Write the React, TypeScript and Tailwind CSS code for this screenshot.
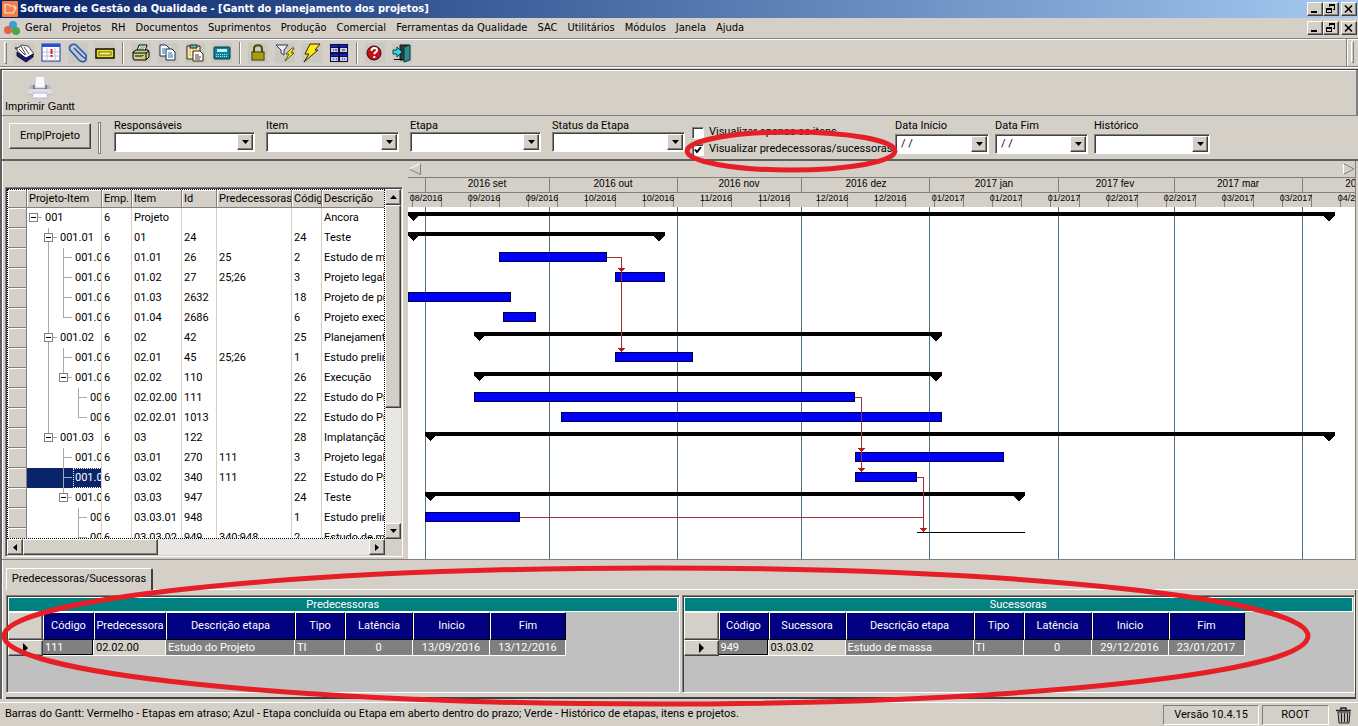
import { ReactNode } from 'react';

interface TreeRow {
  level: number;
  code: string;
  open?: boolean;
  full?: number[];
  top?: number[];
  item: string;
  id: string;
  pred?: string;
  cod?: string;
  desc: string;
  selected?: boolean;
}

const MENUS = ['Geral', 'Projetos', 'RH', 'Documentos', 'Suprimentos', 'Produção', 'Comercial', 'Ferramentas da Qualidade', 'SAC', 'Utilitários', 'Módulos', 'Janela', 'Ajuda'];

const ROWS: TreeRow[] = [
  { level: 0, code: '001', open: true, item: 'Projeto', id: '', desc: 'Ancora' },
  { level: 1, code: '001.01', open: true, full: [1], item: '01', id: '24', cod: '24', desc: 'Teste' },
  { level: 2, code: '001.0', full: [1, 2], item: '01.01', id: '26', pred: '25', cod: '2', desc: 'Estudo de m' },
  { level: 2, code: '001.0', full: [1, 2], item: '01.02', id: '27', pred: '25;26', cod: '3', desc: 'Projeto legal' },
  { level: 2, code: '001.0', full: [1, 2], item: '01.03', id: '2632', cod: '18', desc: 'Projeto de pr' },
  { level: 2, code: '001.0', full: [1], top: [2], item: '01.04', id: '2686', cod: '6', desc: 'Projeto exec' },
  { level: 1, code: '001.02', open: true, full: [1], item: '02', id: '42', cod: '25', desc: 'Planejamento' },
  { level: 2, code: '001.0', full: [1, 2], item: '02.01', id: '45', pred: '25;26', cod: '1', desc: 'Estudo prelim' },
  { level: 2, code: '001.0', open: true, full: [1], top: [2], item: '02.02', id: '110', cod: '26', desc: 'Execução' },
  { level: 3, code: '00', full: [1, 3], item: '02.02.00', id: '111', cod: '22', desc: 'Estudo do Pr' },
  { level: 3, code: '00', full: [1], top: [3], item: '02.02.01', id: '1013', cod: '22', desc: 'Estudo do Pr' },
  { level: 1, code: '001.03', open: true, top: [1], item: '03', id: '122', cod: '28', desc: 'Implatanção' },
  { level: 2, code: '001.0', full: [2], item: '03.01', id: '270', pred: '111', cod: '3', desc: 'Projeto legal' },
  { level: 2, code: '001.0', full: [2], item: '03.02', id: '340', pred: '111', cod: '22', desc: 'Estudo do Pr', selected: true },
  { level: 2, code: '001.0', open: true, top: [2], item: '03.03', id: '947', cod: '24', desc: 'Teste' },
  { level: 3, code: '00', full: [3], item: '03.03.01', id: '948', cod: '1', desc: 'Estudo prelim' },
  { level: 3, code: '00', full: [3], item: '03.03.02', id: '949', pred: '340;948', cod: '2', desc: 'Estudo de m' },
];

// chart coordinates, relative to the left edge of the time scale
const MONTH_LINES = [17, 141, 269, 393, 521, 650, 766, 894];
const MONTHS = [
  { x: 79, label: '2016 set' },
  { x: 205, label: '2016 out' },
  { x: 331, label: '2016 nov' },
  { x: 458, label: '2016 dez' },
  { x: 586, label: '2017 jan' },
  { x: 707, label: '2017 fev' },
  { x: 830, label: '2017 mar' },
  { x: 957, label: '2017 abr' },
];
const WEEKS = ['08/2016', '09/2016', '09/2016', '10/2016', '10/2016', '11/2016', '11/2016', '12/2016', '12/2016', '01/2017', '01/2017', '01/2017', '02/2017', '02/2017', '03/2017', '03/2017', '04/2017'];

const SUMMARIES = [
  { row: 0, from: 0, to: 927 },
  { row: 1, from: 0, to: 257 },
  { row: 6, from: 66, to: 534 },
  { row: 8, from: 66, to: 534 },
  { row: 11, from: 17, to: 927 },
  { row: 14, from: 17, to: 617 },
];
const BARS = [
  { row: 2, from: 91, to: 199 },
  { row: 3, from: 207, to: 257 },
  { row: 4, from: 0, to: 103 },
  { row: 5, from: 95, to: 128 },
  { row: 7, from: 207, to: 285 },
  { row: 9, from: 66, to: 447 },
  { row: 10, from: 153, to: 534 },
  { row: 12, from: 447, to: 596 },
  { row: 13, from: 447, to: 509 },
  { row: 15, from: 17, to: 112 },
];

const raised = 'border border-t-white border-l-white border-r-[#404040] border-b-[#404040] bg-[#d4d0c8] shadow-[inset_-1px_-1px_0_#808080]';
const sunken = 'border border-t-[#808080] border-l-[#808080] border-r-white border-b-white shadow-[inset_1px_1px_0_#404040]';

function WindowButtons() {
  return (
    <div className="flex">
      <button aria-label="Minimizar" className={`flex h-[14px] w-4 items-center justify-center ${raised}`}>
        <svg width="10" height="10" shapeRendering="crispEdges"><path d="M1 7h6v2H1z" /></svg>
      </button>
      <button aria-label="Restaurar" className={`flex h-[14px] w-4 items-center justify-center ${raised}`}>
        <svg width="10" height="10" fill="none" stroke="#000" shapeRendering="crispEdges">
          <path d="M3.5 3V.5h5v5H7M3 1.5h6M.5 4.5h5v4h-5zM0 5.5h6" />
        </svg>
      </button>
      <button aria-label="Fechar" className={`ml-[2px] flex h-[14px] w-4 items-center justify-center ${raised}`}>
        <svg width="10" height="10" stroke="#000" strokeWidth="1.6"><path d="M1 1.5l7 7M8 1.5l-7 7" /></svg>
      </button>
    </div>
  );
}

function Tool({ label, children }: { label: string; children: ReactNode }) {
  return (
    <button aria-label={label} title={label} className="h-5 w-5 bg-[#cac8c1]">
      <svg width="20" height="20" viewBox="0 0 20 20">{children}</svg>
    </button>
  );
}

function Separator() {
  return <div className="h-[22px] w-[2px] border-l border-l-[#808080] bg-white" />;
}

function Combo({ id, label, width, value = '', low }: { id: string; label: string; width: string; value?: string; low?: boolean }) {
  return (
    <div className={`flex flex-col ${width}`}>
      <label htmlFor={id} className="h-3 leading-3 whitespace-nowrap">{label}</label>
      <div className={`relative h-5 ${low ? 'mt-[2px]' : ''}`}>
        <select id={id} className={`h-full w-full appearance-none rounded-none bg-white pl-[5px] whitespace-pre ${sunken}`}>
          <option>{value}</option>
        </select>
        <span className={`pointer-events-none absolute top-[2px] right-[2px] flex h-4 w-4 items-center justify-center ${raised}`}>
          <svg width="7" height="4"><path d="M0 0h7L3.5 4z" /></svg>
        </span>
      </div>
    </div>
  );
}

function TreeCell({ row }: { row: TreeRow }) {
  const x = 6 + row.level * 15;
  return (
    <div className={`flex h-5 items-center overflow-hidden ${row.selected ? 'bg-[#0a246a] text-white' : ''}`}>
      <svg width={x + 10} height="20" className="shrink-0" shapeRendering="crispEdges" fill="none" stroke="#a8a8a8">
        {row.full?.map(l => <path key={l} d={`M${l * 15 + 6}.5 0V20`} />)}
        {row.top?.map(l => <path key={l} d={`M${l * 15 + 6}.5 0V10`} />)}
        {!row.open && <path d={`M${x}.5 9.5H${x + 9}`} />}
        {row.open && (
          <>
            <path d={`M${x + 5} 9.5h4`} />
            <rect x={x - 3.5} y="5.5" width="8" height="8" fill="#fff" stroke="#808080" />
            <path d={`M${x - 2} 9.5h5`} stroke="#000" />
          </>
        )}
      </svg>
      <span className={`flex h-full items-center ${row.selected ? 'border border-dotted border-white pl-px' : 'pl-[2px]'}`}>{row.code}</span>
    </div>
  );
}

function ProjectGrid() {
  const head = 'h-[18px] overflow-hidden border-r border-b border-[#808080] bg-[#d4d0c8] p-0 pl-[2px] text-left font-normal whitespace-nowrap shadow-[inset_1px_1px_0_#fff]';
  const cell = 'h-5 overflow-hidden border-r border-[#d4d0c8] p-0 pl-[2px] whitespace-nowrap';
  return (
    <div className={`mt-[26px] mb-[2px] ml-[2px] flex w-[398px] shrink-0 flex-col p-px ${sunken}`}>
      <div className="flex min-h-0 flex-1">
        <div className="min-w-0 flex-1 overflow-hidden border border-dotted border-black bg-white">
          <table className="w-[378px] table-fixed border-separate border-spacing-0 leading-4">
            <colgroup>
              <col className="w-[19px]" />
              <col className="w-[75px]" />
              <col className="w-[30px]" />
              <col className="w-[50px]" />
              <col className="w-[35px]" />
              <col className="w-[75px]" />
              <col className="w-[30px]" />
              <col className="w-[64px]" />
            </colgroup>
            <thead>
              <tr>
                <th className={head} aria-label="Seleção" />
                {['Projeto-Item', 'Emp.', 'Item', 'Id', 'Predecessoras', 'Código', 'Descrição'].map(h => (
                  <th key={h} className={head}>{h}</th>
                ))}
              </tr>
            </thead>
            <tbody>
              {ROWS.map(row => (
                <tr key={row.item}>
                  <td className="h-5 border-r border-b border-[#808080] bg-[#d4d0c8] p-0 shadow-[inset_1px_1px_0_#fff]" />
                  <td className="h-5 overflow-hidden border-r border-[#d4d0c8] p-0 whitespace-nowrap"><TreeCell row={row} /></td>
                  <td className={cell}>6</td>
                  <td className={cell}>{row.item}</td>
                  <td className={cell}>{row.id}</td>
                  <td className={cell}>{row.pred}</td>
                  <td className={cell}>{row.cod}</td>
                  <td className={cell}>{row.desc}</td>
                </tr>
              ))}
            </tbody>
          </table>
        </div>
        <div className="flex w-4 flex-col bg-[#e9e7e3]">
          <button aria-label="Subir" className={`flex h-4 items-center justify-center ${raised}`}>
            <svg width="7" height="4"><path d="M0 4h7L3.5 0z" /></svg>
          </button>
          <div className={`h-[203px] ${raised}`} />
          <button aria-label="Descer" className={`mt-auto flex h-4 items-center justify-center ${raised}`}>
            <svg width="7" height="4"><path d="M0 0h7L3.5 4z" /></svg>
          </button>
        </div>
      </div>
      <div className="flex h-4">
        <div className="flex flex-1 bg-[#e9e7e3]">
          <button aria-label="Esquerda" className={`flex w-4 items-center justify-center ${raised}`}>
            <svg width="4" height="7"><path d="M4 0v7L0 3.5z" /></svg>
          </button>
          <div className={`w-[135px] ${raised}`} />
          <button aria-label="Direita" className={`ml-auto flex w-4 items-center justify-center ${raised}`}>
            <svg width="4" height="7"><path d="M0 0v7l4-3.5z" /></svg>
          </button>
        </div>
        <div className="w-4" />
      </div>
    </div>
  );
}

function Gantt() {
  return (
    <div className="ml-[5px] flex min-w-0 flex-1 flex-col border-r border-[#808080] font-['Liberation_Sans',Arial,sans-serif]">
      <div className="flex h-4 items-center justify-between">
        <button aria-label="Período anterior">
          <svg width="13" height="12" fill="none"><path d="M12.5 0v11.5L1 6" stroke="#808080" /><path d="M1 6L12.5.5" stroke="#fff" /></svg>
        </button>
        <button aria-label="Próximo período">
          <svg width="12" height="12" fill="none"><path d="M.5 12V.5" stroke="#fff" /><path d="M.5.5L11 6 .5 11.5" stroke="#808080" /></svg>
        </button>
      </div>
      <div className="min-h-0 flex-1 overflow-hidden bg-white">
        <svg width="100%" height="100%" shapeRendering="crispEdges" className="block">
          <rect width="100%" height="30" fill="#d4d0c8" />
          <path d="M0 .5H3000M0 15.5H3000" stroke="#808080" />
          {MONTH_LINES.map(x => (
            <g key={x}>
              <rect x={x} y="0" width="1" height="16" fill="#808080" />
              <rect x={x} y="30" width="1" height="100%" fill="#4f7087" />
            </g>
          ))}
          {MONTHS.map(m => (
            <text key={m.label} x={m.x} y="10" textAnchor="middle" fontSize="10">{m.label}</text>
          ))}
          {WEEKS.map((w, i) => (
            <g key={i}>
              <rect x={4 + i * 58} y="17" width="1" height="13" fill="#808080" />
              <rect x={33 + i * 58} y="17" width="1" height="13" fill="#808080" />
              <text x={18 + i * 58} y="24" textAnchor="middle" fontSize="9">{w}</text>
            </g>
          ))}
          {SUMMARIES.map(s => {
            const y = 35 + s.row * 20;
            return (
              <path key={s.row} d={`M${s.from} ${y}H${s.to}v4l-6 5-6-5H${s.from + 11}l-6 5-5-5z`} />
            );
          })}
          {BARS.map(b => (
            <rect key={b.row} x={b.from + 0.5} y={35.5 + b.row * 20} width={b.to - b.from - 1} height="9" fill="#00f" stroke="#000040" />
          ))}
          <path d="M509 355.5H617" stroke="#000" />
          <g fill="none" stroke="#a03038">
            <path d="M199 80.5H213.5V172M447 220.5H453.5V292M509 300.5H515.5V352M112 340.5H515" />
          </g>
          <g fill="#c01818">
            <path d="M210 91h7l-3 4h-1zM210 171h7l-3 4h-1zM450 271h7l-3 4h-1zM450 291h7l-3 4h-1zM512 351h7l-3 4h-1z" />
          </g>
        </svg>
      </div>
    </div>
  );
}

function LinkTable({ title, keyName, cols, values }: { title: string; keyName: string; cols: string[]; values: string[] }) {
  const heads = ['Código', keyName, 'Descrição etapa', 'Tipo', 'Latência', 'Inicio', 'Fim'];
  return (
    <section className={`flex min-w-0 flex-1 flex-col bg-[#c0c0c0] p-px ${sunken}`}>
      <h2 className="h-[15px] border border-white bg-[#008080] text-center leading-[13px] text-white">{title}</h2>
      <div className="overflow-hidden">
        <table className="table-fixed border-separate border-spacing-0 leading-[14px]">
          <colgroup>
            <col className="w-[35px]" />
            {cols.map((c, i) => <col key={i} className={c} />)}
          </colgroup>
          <thead>
            <tr>
              <th aria-label="Seleção" className={`h-7 p-0 ${raised}`} />
              {heads.map(h => (
                <th key={h} className="h-7 overflow-hidden border border-t-white border-r-black border-b-black border-l-white bg-[#000080] p-0 font-normal whitespace-nowrap text-white">{h}</th>
              ))}
            </tr>
          </thead>
          <tbody>
            <tr>
              <td className={`h-4 p-0 ${raised}`}>
                <svg width="5" height="10" className="mx-auto"><path d="M0 0v10l5-5z" /></svg>
              </td>
              {values.map((v, i) => (
                <td
                  key={i}
                  className={`h-4 overflow-hidden border-r border-b border-white p-0 whitespace-nowrap ${i === 1 ? 'bg-[#d4d0c8] text-black' : 'bg-[#808080] text-white'} ${i === 0 ? 'shadow-[inset_-1px_-1px_0_#000]' : ''} ${i > 3 ? 'text-center' : 'pl-[2px]'}`}
                >
                  {v}
                </td>
              ))}
            </tr>
          </tbody>
        </table>
      </div>
    </section>
  );
}

export default function App() {
  return (
    <div className="relative flex h-screen flex-col overflow-hidden bg-[#d4d0c8] font-['Roboto','Liberation_Sans',sans-serif] text-[11px] text-black">
      <header className="flex h-[18px] shrink-0 items-center bg-linear-to-r from-[#0a246a] to-[#a6caf0] pr-px pl-[2px] font-['DejaVu_Sans_Condensed','DejaVu_Sans',sans-serif]">
        <svg width="16" height="16" viewBox="0 0 16 16" className="mr-[2px]">
          <rect width="16" height="16" rx="1" fill="#f08048" />
          <path d="M3 5V3.5h4L8 5h5v2M3 5v7h8l3-5h-3" fill="none" stroke="#ffe0c8" strokeWidth="1.2" />
        </svg>
        <h1 className="flex-1 truncate font-bold text-white">Software de Gestão da Qualidade - [Gantt do planejamento dos projetos]</h1>
        <WindowButtons />
      </header>

      <nav className="flex h-5 shrink-0 items-center pr-px pl-1 font-['DejaVu_Sans_Condensed','DejaVu_Sans',sans-serif]">
        <svg width="16" height="14" viewBox="0 0 16 14">
          <circle cx="9" cy="4" r="4" fill="#38a0d8" />
          <circle cx="4" cy="9" r="4" fill="#e06048" />
          <circle cx="12" cy="10" r="4" fill="#48a848" />
        </svg>
        <div className="flex flex-1 gap-[10px] pl-[5px]">
          {MENUS.map(m => <button key={m}>{m}</button>)}
        </div>
        <WindowButtons />
      </nav>

      <div className="flex h-[29px] shrink-0 items-center border-t border-b border-[#808080] pl-1 shadow-[inset_0_1px_0_#fff,0_1px_0_#fff]">
        <div className="h-[22px] w-[3px] border border-t-white border-r-[#808080] border-b-[#808080] border-l-white" />
        <div className="ml-[7px] flex items-center gap-[7px]">
          <Tool label="Agenda">
            <path d="M1 5l5-1 1-2 7 1 6 8-8 6z" fill="#fff" stroke="#222" strokeWidth=".8" />
            <path d="M3 9l9 6 7-4v3l-7 5-9-6z" fill="#18188c" stroke="#000" strokeWidth=".8" />
            <path d="M7 3l5 9M10 4l5 7M5 6l6 6M1 5l3 1M4 10l3 4" stroke="#333" strokeWidth=".9" />
          </Tool>
          <Tool label="Calendário">
            <rect x="1" y="1" width="18" height="17" fill="#fff" stroke="#2038b0" />
            <path d="M1 1h18v3H1z" fill="#2850d8" />
            <path d="M2 9h16M2 13h16M6 5v13M14 5v13" stroke="#b8c4d8" />
            <path d="M9.5 6h2v5h-2zM9.5 12h2v2h-2z" fill="#e02020" />
          </Tool>
          <Tool label="Anexos">
            <path d="M6 5l9 9c2 2 4 0 3-2L8 2C5 0 0 3 2 7l9 10c3 3 8 2 7-3" fill="none" stroke="#2858b8" strokeWidth="1.6" />
          </Tool>
          <Tool label="Cartão">
            <rect x="1" y="6" width="18" height="9" fill="#e8e020" stroke="#000" strokeWidth="1.4" />
            <rect x="4" y="9" width="12" height="3" fill="#fff890" stroke="#706800" />
          </Tool>
        </div>
        <div className="mx-[7px]"><Separator /></div>
        <div className="flex items-center gap-[7px]">
          <Tool label="Imprimir">
            <path d="M6 8l2-6h8l-2 6" fill="#fff" stroke="#000" />
            <path d="M9 4h5M8 6h5" stroke="#38a038" />
            <path d="M2 9l3-2h12l1 2v5l-3 3H3l-1-2z" fill="#c8d090" stroke="#000" />
            <path d="M2 10h13v7M15 10l3-2M4 13h9" fill="none" stroke="#000" />
            <path d="M11 14h3" stroke="#d8d000" strokeWidth="2" />
          </Tool>
          <Tool label="Copiar">
            <path d="M2 2h6l3 3v8H2z" fill="#fff" stroke="#103060" />
            <path d="M8 6h6l3 3v8H8z" fill="#fff" stroke="#103060" />
            <path d="M4 6h4M4 8h3M4 10h3M10 10h4M10 12h5M10 14h5" stroke="#3070a0" />
          </Tool>
          <Tool label="Colar">
            <path d="M2 3h13v13H2z" fill="#f4ecc0" stroke="#302800" />
            <path d="M4 6h9M4 9h4M4 12h4" stroke="#d89030" strokeDasharray="2 1" />
            <path d="M5 2h7v3H5z" fill="#60c0c0" stroke="#222" />
            <path d="M8 8h7l3 3v7H8z" fill="#fff" stroke="#402008" />
            <path d="M10 12h4M10 14h6M10 16h5" stroke="#404040" />
          </Tool>
          <Tool label="Calculadora">
            <rect x="2" y="4" width="16" height="12" rx="1" fill="#108098" stroke="#003848" />
            <path d="M5 6h10v3H5z" fill="#c0f0f0" />
            <path d="M4 11.500h12M4 13.500h12" stroke="#b0e8e8" strokeDasharray="1 1" />
          </Tool>
        </div>
        <div className="mx-[7px]"><Separator /></div>
        <div className="flex items-center gap-[7px]">
          <Tool label="Bloquear">
            <path d="M6 9V6c0-5 8-5 8 0v3" fill="none" stroke="#504800" strokeWidth="2" />
            <rect x="4" y="9" width="12" height="8" fill="#d0c020" stroke="#302800" />
            <path d="M5 11h10M5 13h10M5 15h10" stroke="#807800" />
          </Tool>
          <Tool label="Filtrar">
            <path d="M1 2h12L9 7v5l-3-2V7z" fill="#f0f0f0" stroke="#283858" />
            <path d="M17 5l-6 6h3l-4 7 9-8h-3l3-5z" fill="#f8e820" stroke="#404000" strokeWidth=".8" />
          </Tool>
          <Tool label="Executar">
            <path d="M8 1h10l-5 6h3L2 19l5-8H3z" fill="#ffe818" stroke="#302800" />
          </Tool>
          <Tool label="Módulos">
            <path d="M1 1h18v18H1z" fill="#101038" />
            <path d="M2 5h7v4H2zM11 5h7v4h-7zM2 14h7v4H2zM11 14h7v4h-7z" fill="#c8ccec" />
            <path d="M2 3h7M11 3h7M2 12h7M11 12h7" stroke="#1020d8" strokeWidth="2" />
            <path d="M4 7h1M6 7h2M13 7h3M4 16h1M7 16h1M13 16h1M15 16h1" stroke="#222" />
          </Tool>
        </div>
        <div className="mx-[7px]"><Separator /></div>
        <div className="flex items-center gap-[7px]">
          <Tool label="Ajuda">
            <circle cx="9" cy="10" r="7" fill="#c01018" stroke="#400000" />
            <path d="M6.5 8c0-4 5.500-4 5.500-.8 0 2-2.700 1.800-2.700 4M9.300 13v2" fill="none" stroke="#fff" strokeWidth="2" />
          </Tool>
          <Tool label="Sair">
            <path d="M8 2h9v15H8z" fill="#303838" stroke="#101818" />
            <path d="M12 4l6-2v15l-6 2z" fill="#308c8c" stroke="#003838" />
            <path d="M1 7h4V4l5 5-5 5v-3H1z" fill="#30d8e8" stroke="#004850" />
            <path d="M2 16.500h8" stroke="#000" />
          </Tool>
        </div>
        <div className="mr-1 ml-auto flex gap-1">
          <div className="h-[27px] w-px bg-[#808080] shadow-[1px_0_0_#fff]" />
          <div className="mt-[2px] h-[22px] w-[3px] border border-t-white border-r-[#808080] border-b-[#808080] border-l-white" />
        </div>
      </div>

      <div className="mt-[2px] flex min-h-0 flex-1 flex-col border-t border-l-2 border-[#404040] border-l-[#606060] shadow-[inset_1px_1px_0_#fff]">
        <div className="flex h-[46px] shrink-0 items-end border-r-2 border-b border-[#808080] pb-[2px] pl-[3px]">
          <button className="flex flex-col items-center font-['Liberation_Sans',Arial,sans-serif] leading-[14px]">
            <svg width="24" height="24" viewBox="0 0 24 24">
              <path d="M3 10h18l3 5v5H0v-5z" fill="#b4b6c4" />
              <path d="M5 10h14v4H5z" fill="#6c7080" />
              <path d="M7 1h10v12H7z" fill="#f8f8fc" stroke="#c0c0cc" />
              <path d="M0 14h24v5H0z" fill="#dcdce6" />
              <path d="M5 18h14l1 5H4z" fill="#fafafe" stroke="#b8b8c8" />
            </svg>
            Imprimir Gantt
          </button>
        </div>

        <form className="flex h-[45px] shrink-0 items-start border-b-2 border-[#606060] pt-1 pl-[7px]">
          <button type="button" className={`mt-[3px] h-[26px] w-[82px] ${raised}`}>Emp|Projeto</button>
          <div className="mt-[2px] ml-[7px] h-8 w-[3px] border border-[#808080] bg-white" />
          <div className="ml-[13px] flex gap-[11px]">
            <Combo id="resp" label="Responsáveis" width="w-[141px]" />
            <Combo id="item" label="Item" width="w-[133px]" />
            <Combo id="etapa" label="Etapa" width="w-[131px]" />
            <Combo id="status" label="Status da Etapa" width="w-[133px]" />
          </div>
          <div className="mt-[6px] ml-[7px] flex w-[203px] flex-col gap-1">
            {['Visualizar apenas os itens', 'Visualizar predecessoras/sucessoras'].map((t, i) => (
              <label key={t} className="flex h-[13px] items-center gap-[5px] whitespace-nowrap">
                <span className="relative h-3 w-3 shrink-0">
                  <input type="checkbox" defaultChecked={i === 1} className={`peer block h-3 w-3 appearance-none bg-white ${sunken}`} />
                  <svg width="8" height="8" className="pointer-events-none absolute top-[2px] left-[2px] hidden peer-checked:block">
                    <path d="M1 3.5l2 2.500 4-5" fill="none" stroke="#000" strokeWidth="2" />
                  </svg>
                </span>
                {t}
              </label>
            ))}
          </div>
          <div className="flex gap-[6px]">
            <Combo id="inicio" label="Data Início" width="w-[94px]" value="/  /" low />
            <Combo id="fim" label="Data Fim" width="w-[93px]" value="/  /" low />
            <Combo id="hist" label="Histórico" width="w-[116px]" low />
          </div>
        </form>

        <main className="mr-[2px] flex min-h-0 flex-1 border-b border-[#808080] pl-px">
          <ProjectGrid />
          <Gantt />
        </main>

        <div className="flex shrink-0 flex-col pt-2 pl-1">
          <div role="tablist" className="flex h-[22px]">
            <button role="tab" aria-selected="true" className="w-[147px] rounded-tr-xs border-t border-r-2 border-l border-t-white border-r-[#404040] border-l-white">Predecessoras/Sucessoras</button>
            <div className="flex-1 border-b border-white" />
          </div>
          <div className="mr-[2px] flex h-[109px] gap-[2px] border-r border-b-2 border-[#404040] pt-[5px] pb-1">
            <LinkTable
              title="Predecessoras"
              keyName="Predecessora"
              cols={['w-[51px]', 'w-[72px]', 'w-[129px]', 'w-[50px]', 'w-[68px]', 'w-[77px]', 'w-[76px]']}
              values={['111', '02.02.00', 'Estudo do Projeto', 'TI', '0', '13/09/2016', '13/12/2016']}
            />
            <LinkTable
              title="Sucessoras"
              keyName="Sucessora"
              cols={['w-[50px]', 'w-[77px]', 'w-[128px]', 'w-[50px]', 'w-[68px]', 'w-[77px]', 'w-[76px]']}
              values={['949', '03.03.02', 'Estudo de massa', 'TI', '0', '29/12/2016', '23/01/2017']}
            />
          </div>
        </div>
      </div>

      <footer className="mt-[3px] flex h-6 shrink-0 items-center border-t border-white pr-[5px] pl-[5px]">
        <p className="flex-1 truncate">Barras do Gantt: Vermelho - Etapas em atraso; Azul - Etapa concluída ou Etapa em aberto dentro do prazo; Verde - Histórico de etapas, itens e projetos.</p>
        <div className="flex gap-[3px] text-center leading-[18px]">
          <span className="w-[96px] border border-t-[#808080] border-r-white border-b-white border-l-[#808080]">Versão 10.4.15</span>
          <span className="w-[67px] border border-t-[#808080] border-r-white border-b-white border-l-[#808080]">ROOT</span>
        </div>
        <button aria-label="Lixeira" className="ml-[6px]">
          <svg width="18" height="18" viewBox="0 0 18 18" fill="none" stroke="#202020">
            <path d="M3 6h12l-1 11H4z" fill="#b8b8b8" />
            <path d="M1 4.5h15M6 4V2h5v2" strokeWidth="1.500" />
            <path d="M6.5 7v9M9.5 7v9M12.5 7v9" />
          </svg>
        </button>
      </footer>

      {/* hand-drawn highlights over the window */}
      <svg className="pointer-events-none absolute inset-0 h-full w-full" fill="none" stroke="#e61e25" strokeWidth="5">
        <ellipse cx="791" cy="151" rx="104" ry="19" />
        <ellipse cx="656" cy="636" rx="652" ry="68" />
      </svg>
    </div>
  );
}
